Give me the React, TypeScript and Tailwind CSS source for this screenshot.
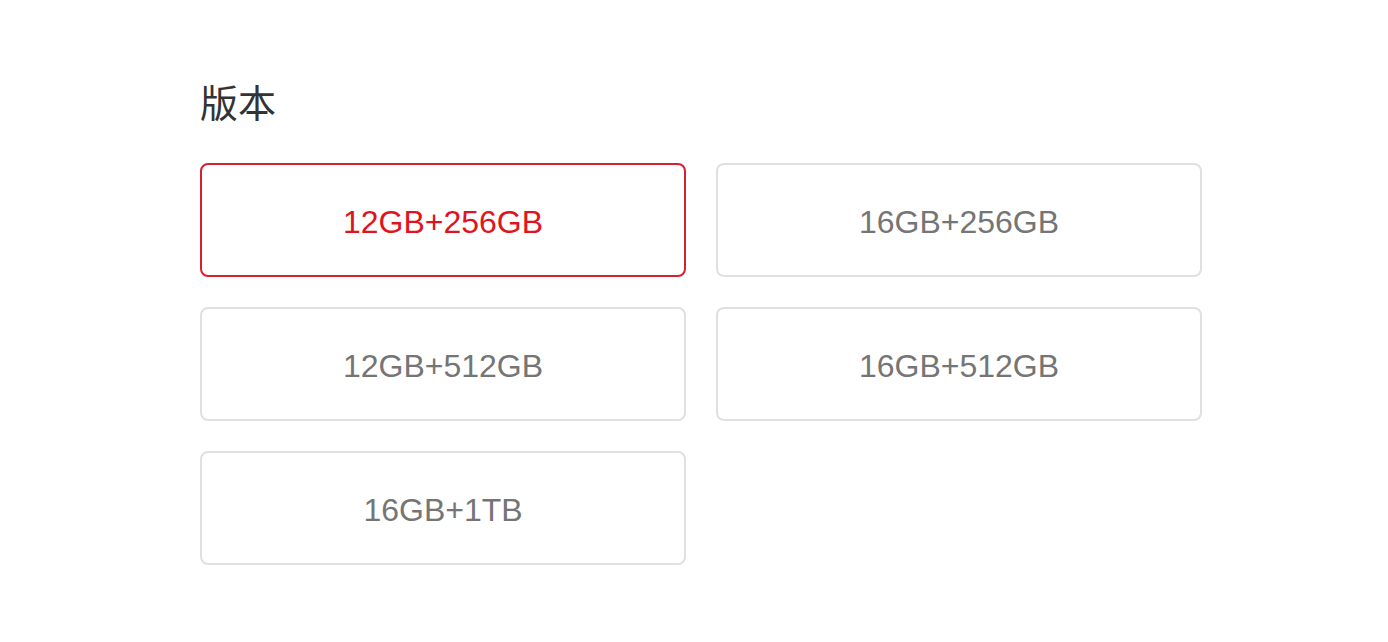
export default function App() {
  const items = ["12GB+256GB", "16GB+256GB", "12GB+512GB", "16GB+512GB", "16GB+1TB"];
  return (
    <div className="w-[1388px] h-[642px] bg-white pl-[200px] pt-[76px]" style={{ fontFamily: '"Liberation Sans", "Noto Sans CJK SC", sans-serif' }}>
      <div className="text-[38px] leading-[50px] text-[#333333] h-[50px]" style={{ fontFamily: '"Noto Sans CJK SC", sans-serif' }}>版本</div>
      <div className="mt-[37px] grid grid-cols-[486px_486px] gap-x-[30px] gap-y-[30px]">
        {items.map((t, i) => (
          <div
            key={t}
            className={
              i === 0
                ? "h-[114px] rounded-[8px] border-2 border-[#d9202e] flex items-center justify-center pt-[4px] text-[32px] text-[#e0141e]"
                : "h-[114px] rounded-[8px] border-2 border-[#e0e0e0] flex items-center justify-center pt-[4px] text-[32px] text-[#757575]"
            }
          >
            {t}
          </div>
        ))}
      </div>
    </div>
  );
}
